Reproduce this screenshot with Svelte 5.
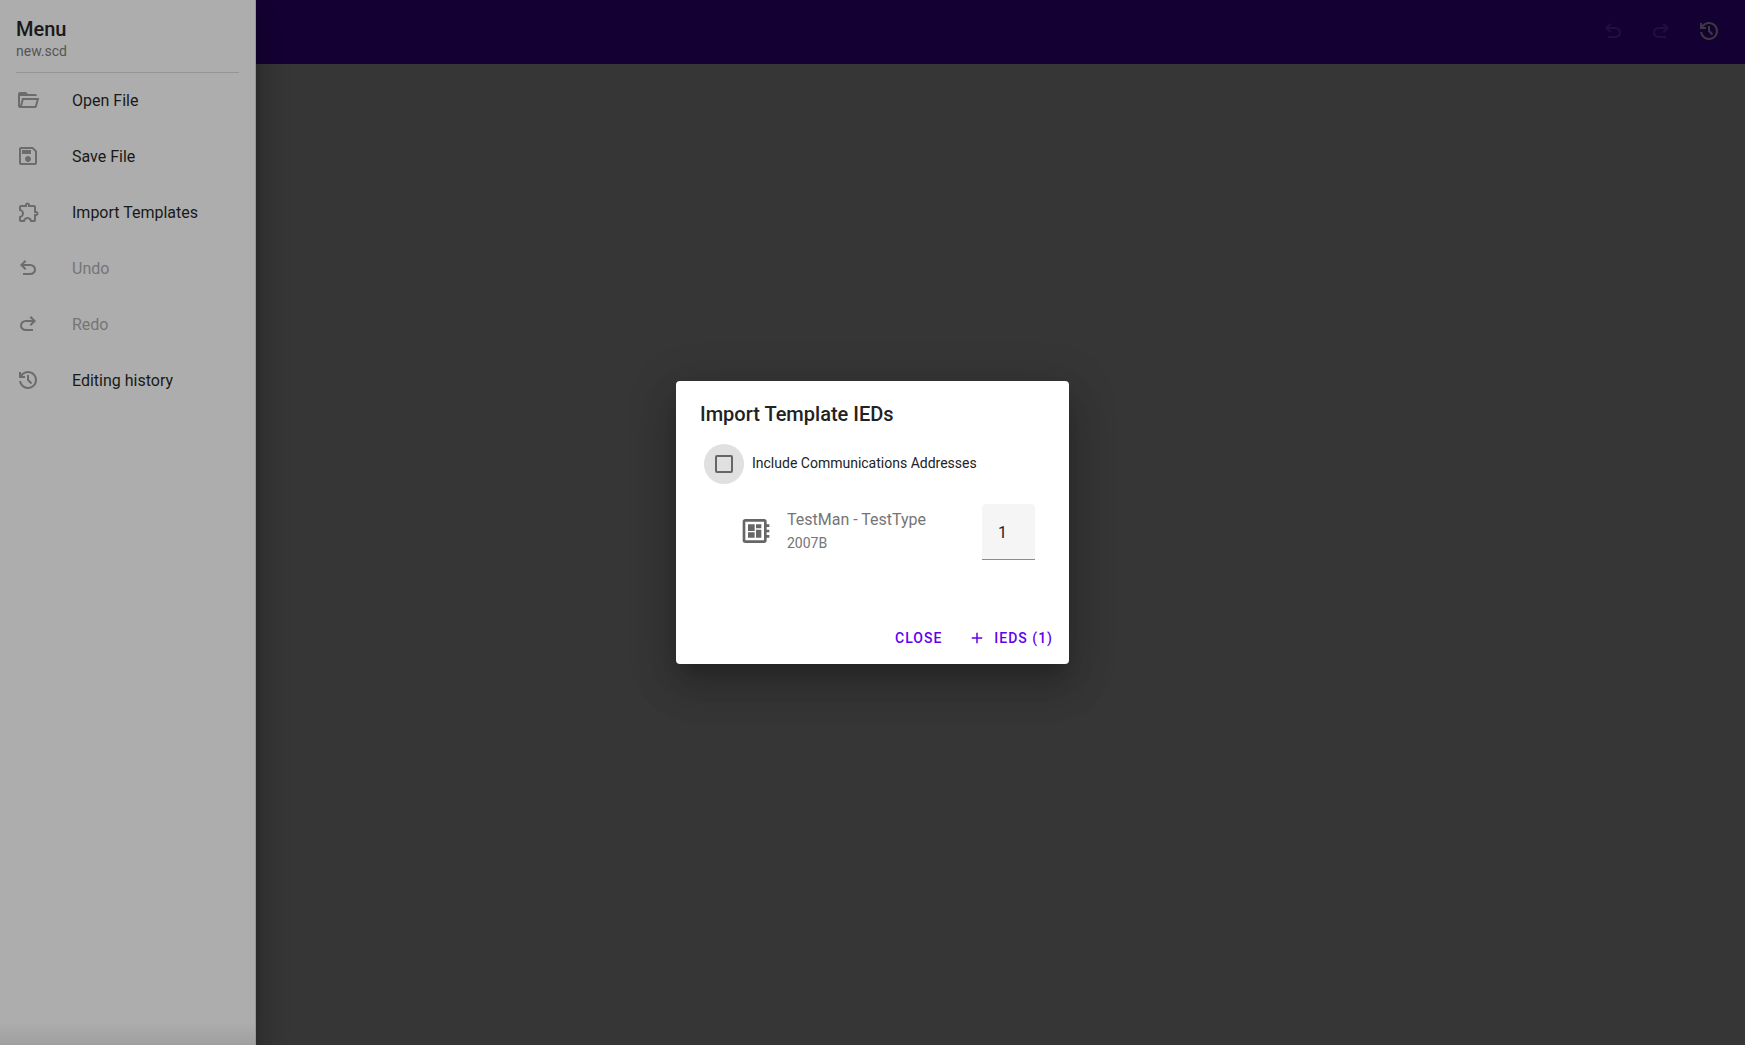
<script>
  const icons = {
    folder: 'M6.1,10L4,18V8H21A2,2 0 0,0 19,6H12L10,4H4A2,2 0 0,0 2,6V18A2,2 0 0,0 4,20H19C19.9,20 20.7,19.4 20.9,18.5L23.2,10H6.1M19,18H6L7.6,12H20.6L19,18Z',
    save: 'M17 3H5C3.89 3 3 3.9 3 5V19C3 20.1 3.89 21 5 21H19C20.1 21 21 20.1 21 19V7L17 3M19 19H5V5H16.17L19 7.83V19M12 12C10.34 12 9 13.34 9 15S10.34 18 12 18 15 16.66 15 15 13.66 12 12 12M6 6H15V10H6V6Z',
    extension: 'M8.8 22H5q-.825 0-1.412-.587Q3 20.825 3 20v-3.800q1.200 0 2.100-.763.900-.762.900-1.937t-.900-1.938Q4.200 10.800 3 10.800V7q0-.825.588-1.412Q4.175 5 5 5h4q0-1.050.725-1.775Q10.450 2.500 11.500 2.500q1.050 0 1.775.725Q14 3.950 14 5h4q.825 0 1.413.588Q20 6.175 20 7v4q1.050 0 1.775.725.725.725.725 1.775 0 1.050-.725 1.775Q21.050 16 20 16v4q0 .825-.587 1.413Q18.825 22 18 22h-3.800q0-1.250-.787-2.125Q12.625 19 11.500 19t-1.912.875Q8.800 20.750 8.800 22ZM5 20h2.125q.600-1.650 1.925-2.325Q10.375 17 11.500 17q1.125 0 2.450.675Q15.275 18.350 15.875 20H18v-6h2q.200 0 .350-.150.150-.150.150-.350 0-.200-.150-.350Q20.200 13 20 13h-2V7h-6V5q0-.200-.150-.350-.150-.150-.350-.150-.200 0-.350.150Q11 4.800 11 5v2H5v2.200q1.350.500 2.175 1.675Q8 12.050 8 13.500q0 1.425-.825 2.600T5 17.800Z',
    undo: 'M7 19v-2h7.1q1.575 0 2.737-1Q18 15 18 13.5T16.837 11q-1.162-1-2.737-1H7.8l2.6 2.6L9 14 4 9l5-5 1.400 1.400L7.800 8h6.300q2.425 0 4.163 1.575Q20 11.150 20 13.500q0 2.350-1.737 3.925Q16.525 19 14.100 19Z',
    redo: 'M9.900 19q-2.425 0-4.163-1.575Q4 15.850 4 13.500q0-2.350 1.737-3.925Q7.475 8 9.900 8h6.300l-2.600-2.600L15 4l5 5-5 5-1.400-1.400 2.600-2.600H9.900q-1.575 0-2.737 1Q6 12 6 13.500T7.163 16q1.162 1 2.737 1H17v2Z',
    history: 'M12 21q-3.450 0-6.012-2.287Q3.425 16.425 3.050 13H5.100q.350 2.600 2.313 4.300Q9.375 19 12 19q2.925 0 4.962-2.038Q19 14.925 19 12t-2.038-4.963Q14.925 5 12 5q-1.725 0-3.225.800T6.250 8H9v2H3V4h2v2.350q1.275-1.600 3.113-2.475Q9.950 3 12 3q1.875 0 3.513.712 1.637.713 2.850 1.925 1.212 1.213 1.925 2.850Q21 10.125 21 12t-.712 3.513q-.713 1.637-1.925 2.850-1.213 1.212-2.850 1.925Q13.875 21 12 21Zm2.800-4.800L11 12.400V7h2v4.600l3.200 3.200Z',
    board: 'M22,9V7H20V5A2,2 0 0,0 18,3H4A2,2 0 0,0 2,5V19A2,2 0 0,0 4,21H18A2,2 0 0,0 20,19V17H22V15H20V13H22V11H20V9H22M18,19H4V5H18V19M6,13H11V17H6V13M12,7H16V10H12V7M6,7H11V12H6V7M12,11H16V17H12V11Z',
    add: 'M19,13H13V19H11V13H5V11H11V5H13V11H19V13Z'
  };
  const menu = [
    { label: 'Open File', icon: 'folder' },
    { label: 'Save File', icon: 'save' },
    { label: 'Import Templates', icon: 'extension' },
    { label: 'Undo', icon: 'undo', disabled: true },
    { label: 'Redo', icon: 'redo', disabled: true },
    { label: 'Editing history', icon: 'history' }
  ];
  const actions = [
    { label: 'Undo', icon: 'undo', disabled: true },
    { label: 'Redo', icon: 'redo', disabled: true },
    { label: 'Editing history', icon: 'history' }
  ];
  let include = $state(false);
  let count = $state(1);
</script>

{#snippet icon(name)}
  <svg class="icon" viewBox="0 0 24 24" aria-hidden="true"><path d={icons[name]} /></svg>
{/snippet}

<div class="app">
  <aside class="drawer">
    <header class="drawer-head">
      <h1>Menu</h1>
      <p>new.scd</p>
    </header>
    <nav>
      {#each menu as item}
        <button class="item" disabled={item.disabled}>
          {@render icon(item.icon)}<span>{item.label}</span>
        </button>
      {/each}
    </nav>
  </aside>

  <main>
    <div class="bar">
      {#each actions as action}
        <button class="action" aria-label={action.label} disabled={action.disabled}>{@render icon(action.icon)}</button>
      {/each}
    </div>
  </main>

  <div class="overlay">
    <div class="dialog" role="dialog" aria-modal="true" aria-labelledby="title">
      <h2 id="title">Import Template IEDs</h2>
      <label class="include">
        <span class="ripple"><input type="checkbox" bind:checked={include} /></span>
        <span class="include-text">Include Communications Addresses</span>
      </label>
      <div class="ied">
        {@render icon('board')}
        <label class="ied-text" for="count">
          <span class="type">TestMan - TestType</span>
          <span class="edition">2007B</span>
        </label>
        <input id="count" class="count" type="number" min="0" bind:value={count} />
      </div>
      <footer>
        <button class="text-button">CLOSE</button>
        <button class="text-button">{@render icon('add')}IEDS ({count})</button>
      </footer>
    </div>
  </div>
</div>

<style>
  :global(body) { margin: 0; }
  .app, .app * { box-sizing: border-box; }
  .app {
    position: relative;
    display: flex;
    min-height: 100vh;
    overflow: hidden;
    font-family: Roboto, sans-serif;
    background: #363636;
  }
  h1, h2, p { margin: 0; }
  button { border: 0; padding: 0; background: none; font-family: inherit; }
  .icon { display: block; flex: none; width: 24px; height: 24px; fill: currentColor; }

  .drawer {
    position: relative;
    width: 256px;
    flex: none;
    color: #191919;
    background: linear-gradient(to top, #a0a0a0, #adadad 24px);
    border-right: 1px solid #959595;
    box-shadow: 0 8px 10px -5px #0003, 0 16px 24px 2px #00000024, 0 6px 30px 5px #0000001f;
  }
  .drawer-head { margin: 0 16px; padding: 16px 0 12px; box-shadow: 0 1px #959595; }
  h1 { font-size: 20px; line-height: 26px; font-weight: 500; }
  .drawer-head p { font-size: 14px; line-height: 18px; color: #555; }
  .item {
    display: flex;
    align-items: center;
    gap: 32px;
    width: 100%;
    height: 56px;
    padding: 0 16px;
    font-size: 16px;
    color: #191919;
  }
  .item .icon { color: #6c6c6c; }
  .item:disabled { color: #757575; }

  main { flex: 1; min-width: 0; }
  .bar {
    display: flex;
    align-items: center;
    justify-content: flex-end;
    height: 64px;
    padding: 0 12px 2px;
    background: #150034;
  }
  .action { display: grid; place-items: center; width: 48px; height: 48px; color: #3b3b3b; }
  .action:disabled { color: #21103c; }

  .overlay { position: absolute; inset: 0; display: grid; place-items: center; }
  .dialog {
    padding: 20px 0 8px;
    width: 393px;
    color: #222;
    background: #fff;
    border-radius: 4px;
    box-shadow: 0 11px 15px -7px #0003, 0 24px 38px 3px #00000024, 0 9px 46px 8px #0000001f;
  }
  h2 { padding: 0 24px; font-size: 20px; line-height: 26px; font-weight: 500; }
  .include { display: flex; align-items: center; gap: 8px; padding: 17px 28px 0; font-size: 14px; }
  .include-text { padding-bottom: 2px; }
  .ripple { display: grid; place-items: center; width: 40px; height: 40px; border-radius: 50%; background: #e0e0e0; }
  .ripple input { appearance: none; width: 18px; height: 18px; margin: 0; border: 2px solid #666; border-radius: 2px; }
  .ripple input:checked { background: #6200ee; border-color: #6200ee; }
  .ied { display: flex; align-items: center; gap: 15px; padding: 20px 34px 0 64px; color: #666; }
  .ied .icon { width: 32px; height: 34px; padding-bottom: 2px; }
  .ied-text { flex: 1; display: flex; flex-direction: column; color: #757575; }
  .type { font-size: 16px; line-height: 24px; }
  .edition { font-size: 14px; line-height: 22px; padding-bottom: 2px; }
  .count {
    width: 53px;
    height: 56px;
    padding: 2px 16px 0;
    border: 0;
    border-bottom: 1px solid #8c8c8c;
    border-radius: 4px 4px 0 0;
    outline: 0;
    font-family: inherit;
    font-size: 16px;
    color: #222;
    background: linear-gradient(#f5f5f5, #f5f5f5);
    appearance: textfield;
  }
  .count::-webkit-inner-spin-button { display: none; }
  footer { display: flex; justify-content: flex-end; gap: 10px; padding: 60px 8px 0; }
  .text-button {
    display: flex;
    align-items: center;
    gap: 8px;
    height: 36px;
    padding: 0 8px;
    font-size: 14px;
    font-weight: 500;
    letter-spacing: 1px;
    color: #6200ee;
  }
  .text-button .icon { width: 18px; height: 18px; }
</style>
